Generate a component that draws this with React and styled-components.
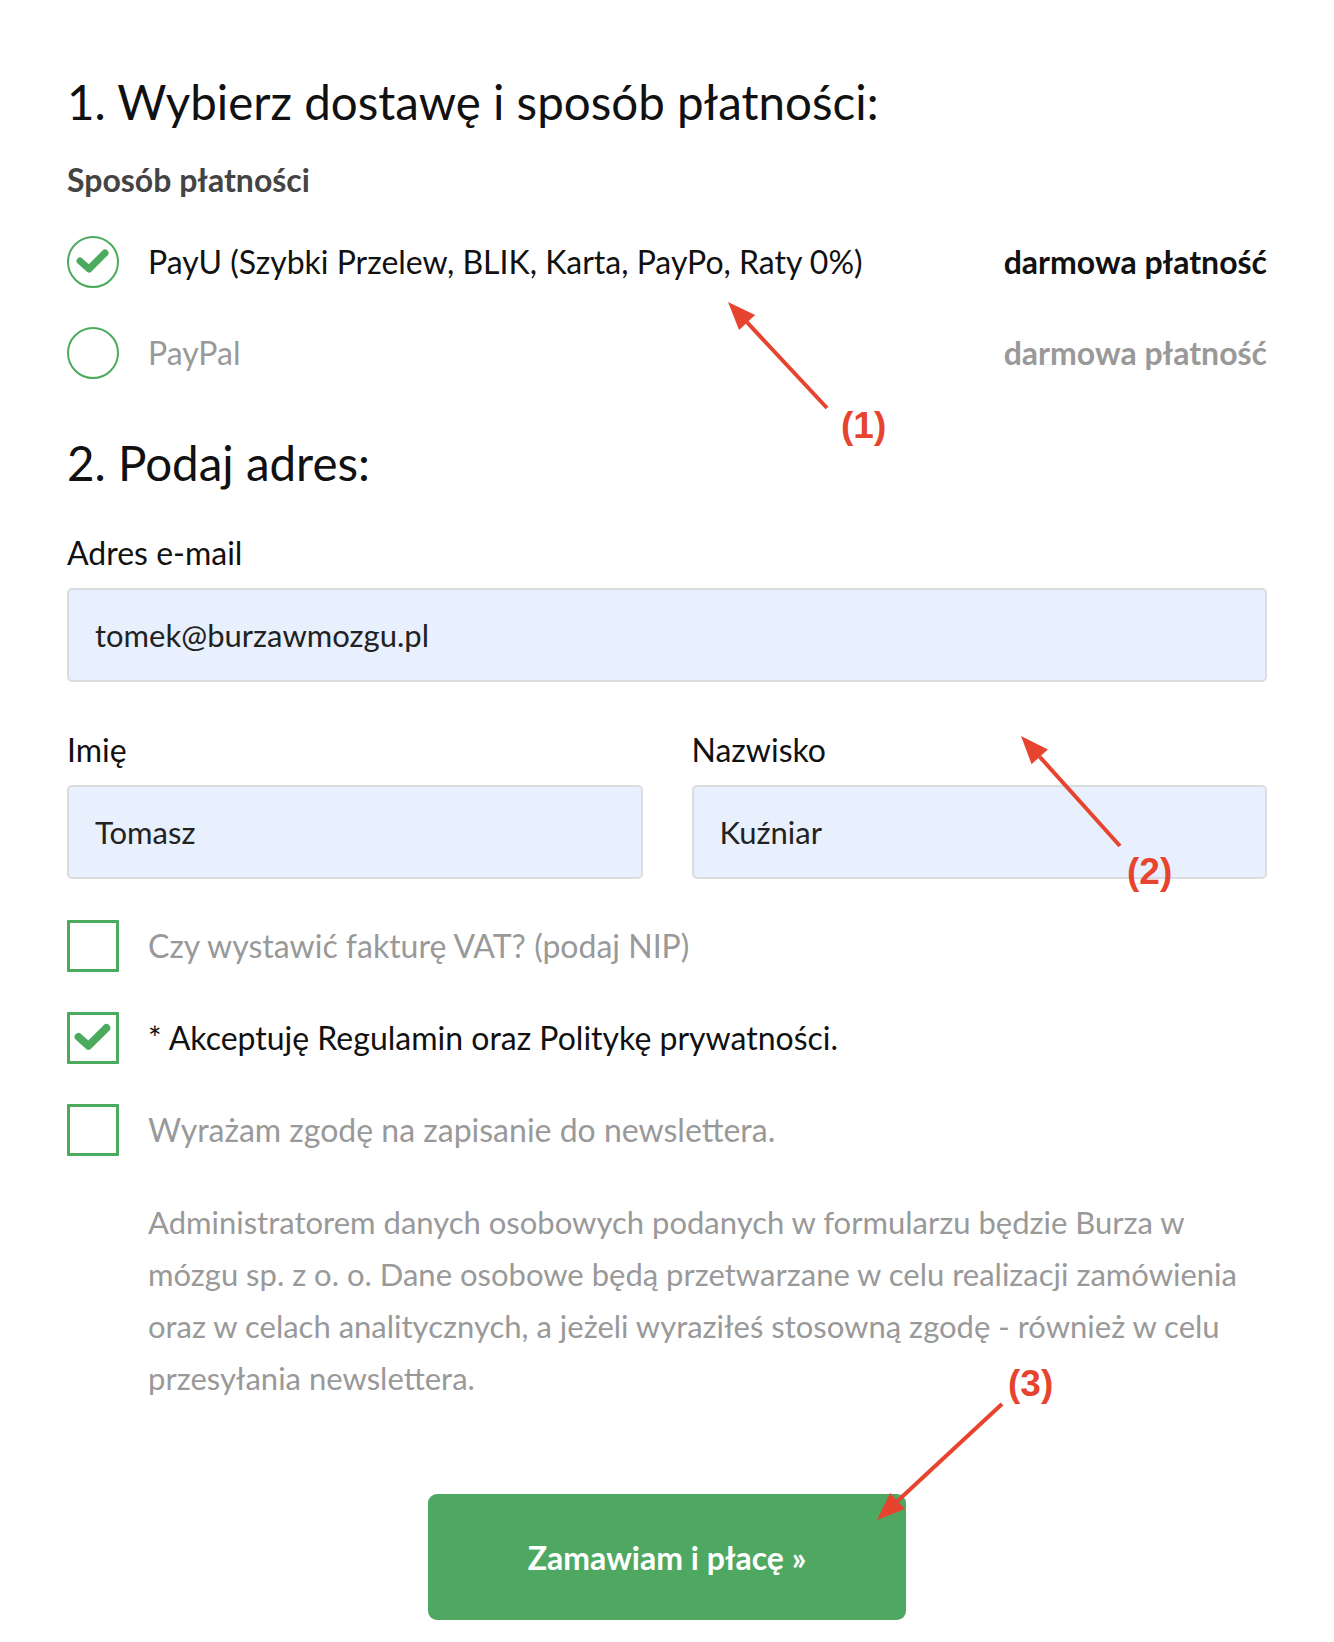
import React from 'react';
import styled, { createGlobalStyle } from 'styled-components';

const GlobalStyle = createGlobalStyle`
  body {
    margin: 0;
    background: #fff;
    font-family: Lato, "Open Sans", sans-serif;
    color: #111;
  }
`;

const green = '#4caa5e';
const red = '#e6442f';

const Page = styled.div`
  position: relative;
  width: 1334px;
  min-height: 1642px;
  box-sizing: border-box;
  padding: 74px 67px 0;
  display: flex;
  flex-direction: column;
`;

const Heading = styled.h1`
  margin: ${({ $top }) => $top || 0}px 0 0;
  font-size: 47.5px;
  line-height: 55px;
  font-weight: 400;
  color: #111;
`;

const SubHeading = styled.h3`
  margin: 31px 0 0;
  font-size: 32px;
  line-height: 40px;
  font-weight: 700;
  color: #444;
`;

const OptionList = styled.div`
  display: flex;
  flex-direction: column;
  gap: ${({ $gap }) => $gap}px;
  margin-top: ${({ $top }) => $top}px;
`;

const Option = styled.label`
  display: flex;
  align-items: center;
  gap: 29px;
  font-size: 32px;
  line-height: 40px;
  color: ${({ $active }) => ($active ? '#111' : '#999')};
`;

const OptionName = styled.span`
  flex: 1;
`;

const Price = styled.span`
  font-weight: 700;
`;

const Radio = styled.span`
  width: 52px;
  height: 52px;
  box-sizing: border-box;
  border: 2px solid ${green};
  border-radius: 50%;
  display: flex;
  align-items: center;
  justify-content: center;
  flex-shrink: 0;
`;

const Box = styled(Radio)`
  border-width: 3px;
  border-radius: 1px;
`;

const Label = styled.div`
  font-size: 32px;
  line-height: 40px;
  color: #111;
  margin: ${({ $top }) => $top}px 0 15px;
`;

const Input = styled.div`
  height: 94px;
  box-sizing: border-box;
  padding: 0 26px;
  display: flex;
  align-items: center;
  background: #e8f0fe;
  border: 2px solid #dadce0;
  border-radius: 5px;
  font-size: 31px;
  color: #222;
`;

const Row = styled.div`
  display: grid;
  grid-template-columns: 1fr 1fr;
  column-gap: 49px;
  margin-top: 48px;
`;

const Field = styled.div`
  display: flex;
  flex-direction: column;
`;

const Note = styled.p`
  margin: 40px 0 0 81px;
  font-size: 31px;
  line-height: 52px;
  color: #999;
`;

const SubmitButton = styled.button`
  align-self: center;
  margin-top: 90px;
  width: 478px;
  height: 126px;
  border: 0;
  border-radius: 9px;
  background: #4ea862;
  color: #fff;
  font-family: Lato, sans-serif;
  font-size: 32px;
  font-weight: 700;
  cursor: pointer;
`;

const Overlay = styled.svg`
  position: absolute;
  inset: 0;
  pointer-events: none;
`;

const Tag = styled.text`
  font-family: "Liberation Sans", Arial, sans-serif;
  font-weight: 700;
  font-size: 37px;
  fill: ${red};
`;

const Tick = ({ size = 34 }) => (
  <svg width={size} height={size} viewBox="0 0 34 34">
    <polyline
      points="4,16 13,24 29,8"
      fill="none"
      stroke={green}
      strokeWidth="7"
      strokeLinecap="round"
      strokeLinejoin="round"
    />
  </svg>
);

// red callout arrows drawn on top of the form
const callouts = [
  { from: [827, 408], to: [728, 302], tag: [841, 438], text: '(1)' },
  { from: [1120, 846], to: [1021, 736], tag: [1127, 884], text: '(2)' },
  { from: [1002, 1404], to: [877, 1520], tag: [1008, 1396], text: '(3)' },
];

const Arrow = ({ from, to }) => {
  const [x1, y1] = from;
  const [x2, y2] = to;
  const a = Math.atan2(y2 - y1, x2 - x1);
  const len = 28;
  const w = 11;
  const bx = x2 - len * Math.cos(a);
  const by = y2 - len * Math.sin(a);
  const px = -Math.sin(a) * w;
  const py = Math.cos(a) * w;
  return (
    <g>
      <line x1={x1} y1={y1} x2={bx} y2={by} stroke={red} strokeWidth="4" />
      <polygon points={`${x2},${y2} ${bx + px},${by + py} ${bx - px},${by - py}`} fill={red} />
    </g>
  );
};

export default function App() {
  return (
    <>
      <GlobalStyle />
      <Page>
        <Heading>1. Wybierz dostawę i sposób płatności:</Heading>
        <SubHeading>Sposób płatności</SubHeading>

        <OptionList $gap={39} $top={36}>
          <Option $active>
            <Radio><Tick /></Radio>
            <OptionName>PayU (Szybki Przelew, BLIK, Karta, PayPo, Raty 0%)</OptionName>
            <Price>darmowa płatność</Price>
          </Option>
          <Option>
            <Radio />
            <OptionName>PayPal</OptionName>
            <Price>darmowa płatność</Price>
          </Option>
        </OptionList>

        <Heading $top={56}>2. Podaj adres:</Heading>

        <Label $top={43}>Adres e-mail</Label>
        <Input>tomek@burzawmozgu.pl</Input>

        <Row>
          <Field>
            <Label $top={0}>Imię</Label>
            <Input>Tomasz</Input>
          </Field>
          <Field>
            <Label $top={0}>Nazwisko</Label>
            <Input>Kuźniar</Input>
          </Field>
        </Row>

        <OptionList $gap={40} $top={41}>
          <Option>
            <Box />
            <OptionName>Czy wystawić fakturę VAT? (podaj NIP)</OptionName>
          </Option>
          <Option $active>
            <Box><Tick size={38} /></Box>
            <OptionName>* Akceptuję Regulamin oraz Politykę prywatności.</OptionName>
          </Option>
          <Option>
            <Box />
            <OptionName>Wyrażam zgodę na zapisanie do newslettera.</OptionName>
          </Option>
        </OptionList>

        <Note>
          Administratorem danych osobowych podanych w formularzu będzie Burza w mózgu sp. z o. o. Dane
          osobowe będą przetwarzane w celu realizacji zamówienia oraz w celach analitycznych, a jeżeli
          wyraziłeś stosowną zgodę - również w celu przesyłania newslettera.
        </Note>

        <SubmitButton>Zamawiam i płacę »</SubmitButton>

        <Overlay width="1334" height="1642">
          {callouts.map((c) => (
            <g key={c.text}>
              <Arrow from={c.from} to={c.to} />
              <Tag x={c.tag[0]} y={c.tag[1]}>{c.text}</Tag>
            </g>
          ))}
        </Overlay>
      </Page>
    </>
  );
}
